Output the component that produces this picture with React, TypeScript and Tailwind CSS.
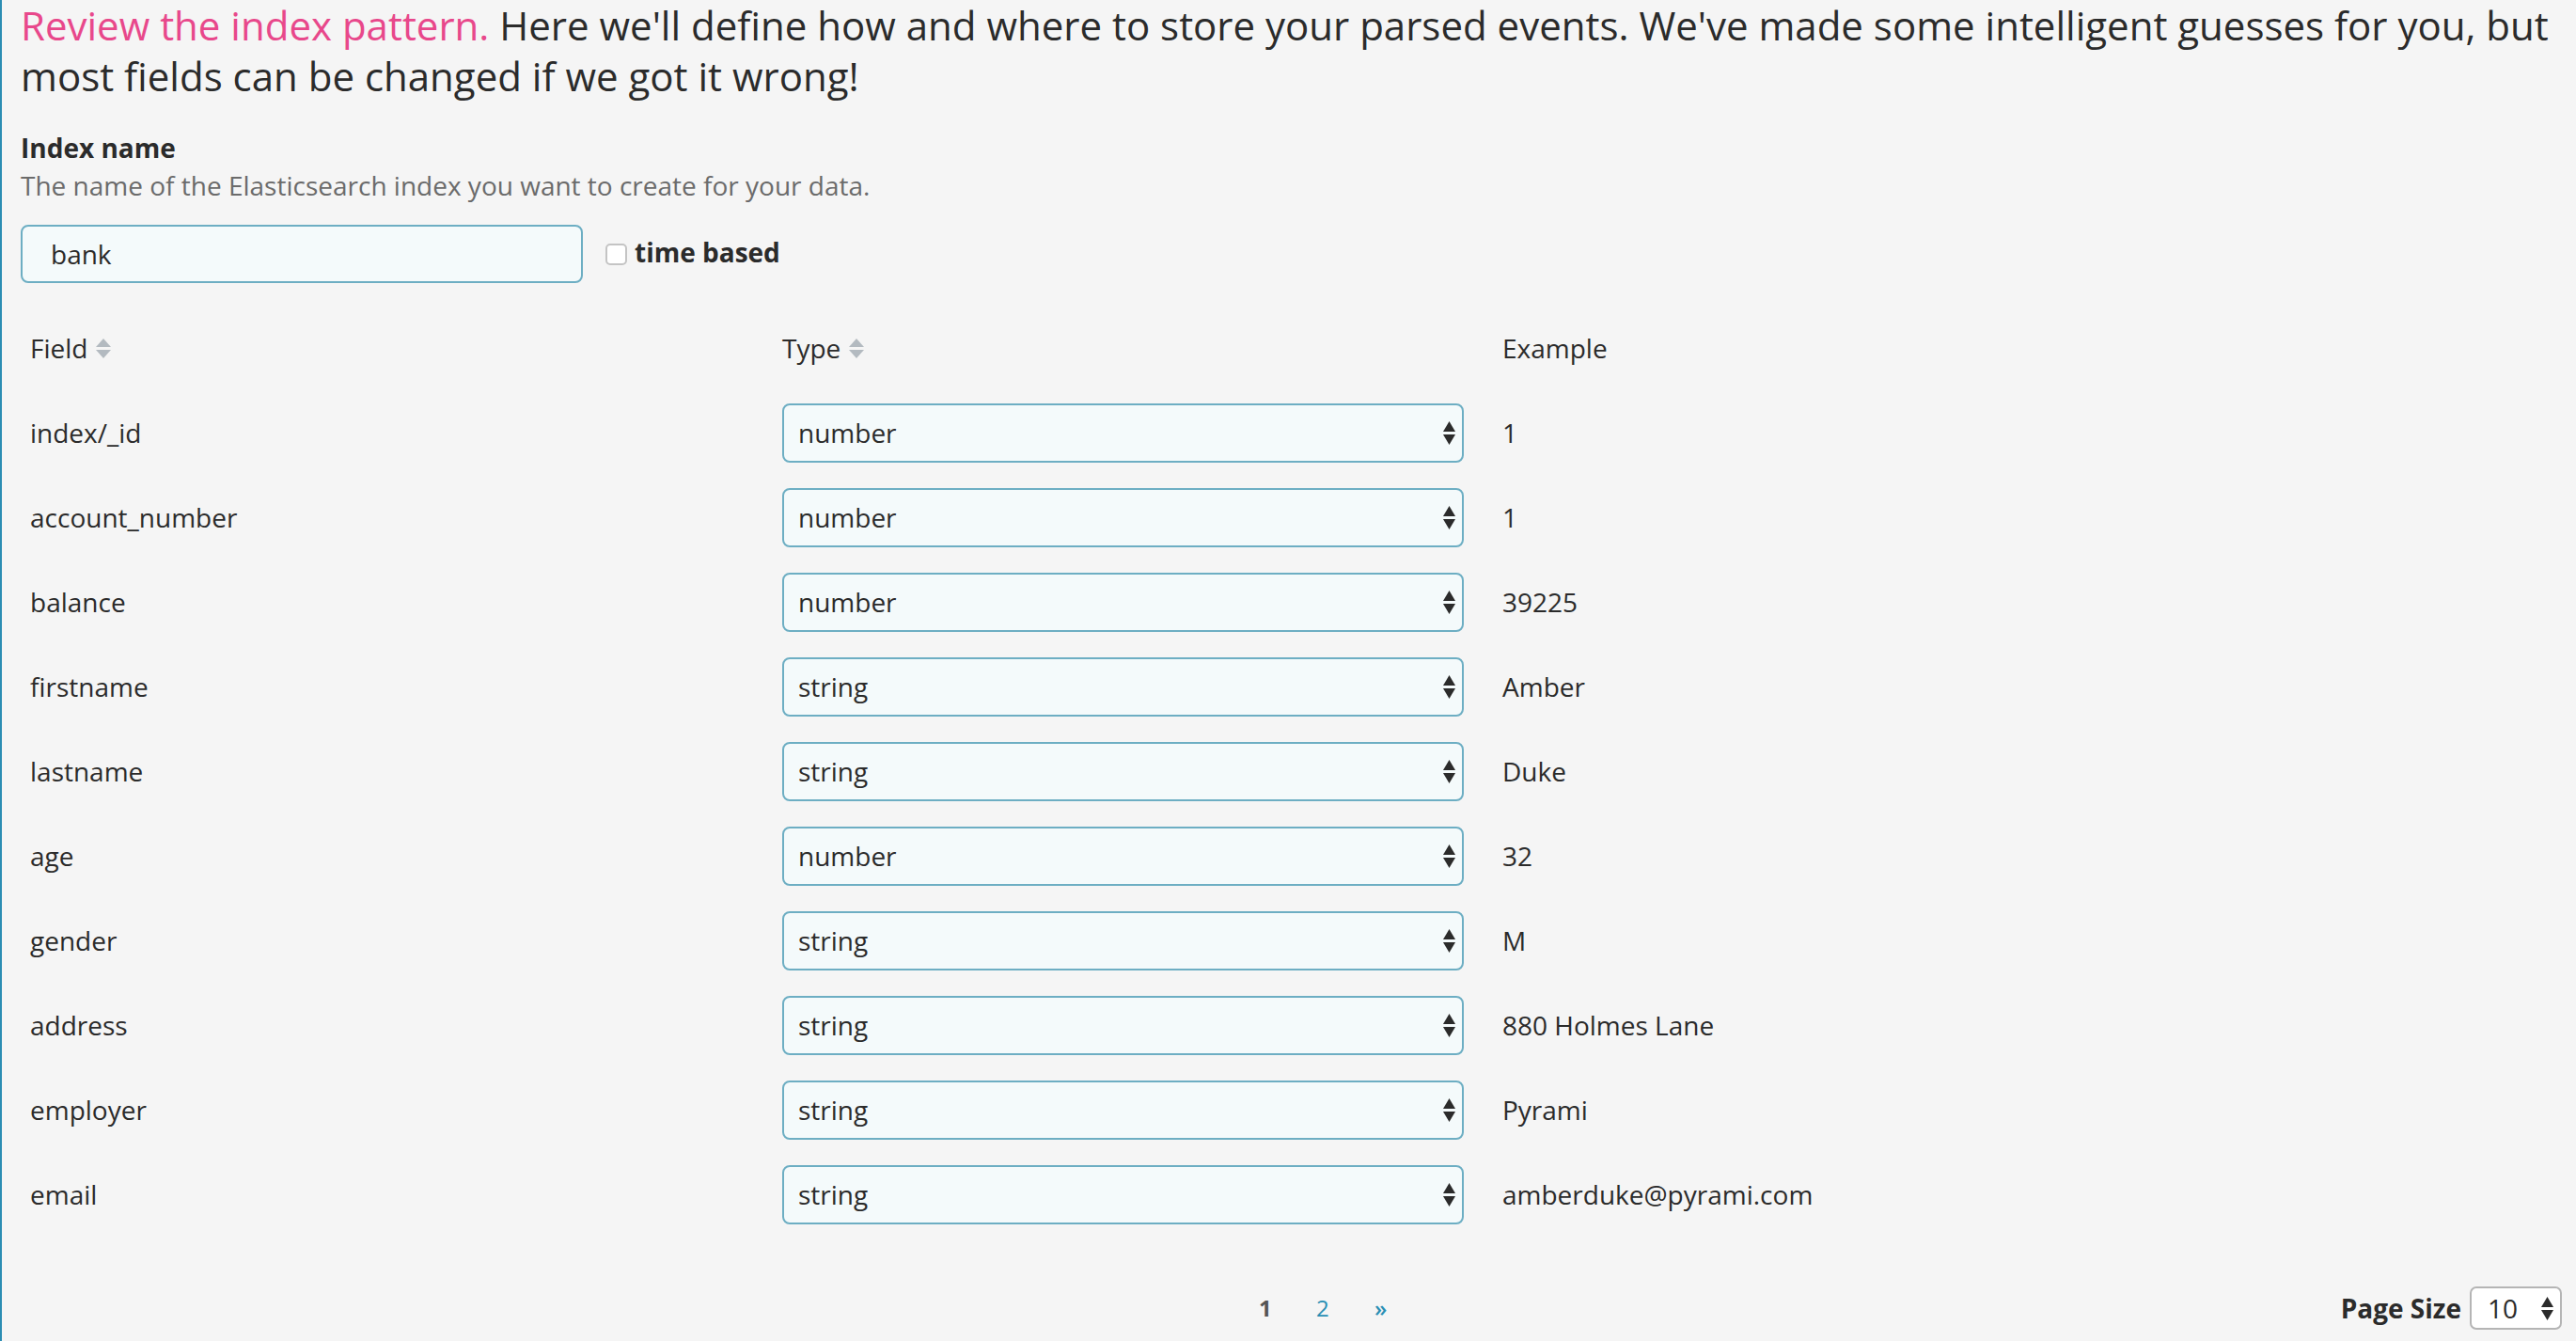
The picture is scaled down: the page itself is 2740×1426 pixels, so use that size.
import React from "react";

const rows: [string, string, string][] = [
  ["index/_id", "number", "1"],
  ["account_number", "number", "1"],
  ["balance", "number", "39225"],
  ["firstname", "string", "Amber"],
  ["lastname", "string", "Duke"],
  ["age", "number", "32"],
  ["gender", "string", "M"],
  ["address", "string", "880 Holmes Lane"],
  ["employer", "string", "Pyrami"],
  ["email", "string", "amberduke@pyrami.com"],
];

function SortIcon() {
  return (
    <svg width="16" height="21" viewBox="0 0 16 21" className="ml-[9px] shrink-0">
      <polygon points="8,0 16,9 0,9" fill="#b3bac0" />
      <polygon points="0,12 16,12 8,21" fill="#b3bac0" />
    </svg>
  );
}

function SelectArrows() {
  return (
    <svg width="13" height="25" viewBox="0 0 13 25" className="shrink-0">
      <polygon points="6.5,0 13,11 0,11" fill="#2b2b2b" />
      <polygon points="0,14 13,14 6.5,25" fill="#2b2b2b" />
    </svg>
  );
}

export default function App() {
  return (
    <div
      className="min-h-screen bg-[#f5f5f5] border-l-2 border-[#2b8db3] pl-[20px] pr-[15px] text-[#2b2b2b]"
      style={{ fontFamily: '"Open Sans", "Liberation Sans", sans-serif' }}
    >
      <h1 className="text-[42px] leading-[54px] font-normal m-0">
        <span className="text-[#e8488b]">Review the index pattern.</span> Here we'll define how and where to
        store your parsed events. We've made some intelligent guesses for you, but most fields can be changed
        if we got it wrong!
      </h1>

      <div className="mt-[29px] text-[28px] leading-[40px] font-bold">Index name</div>
      <div className="text-[28px] leading-[40px] text-[#6b6b6b]">
        The name of the Elasticsearch index you want to create for your data.
      </div>

      <div className="mt-[22px] flex items-center">
        <div className="h-[62px] w-[598px] rounded-[8px] border-2 border-[#6daec3] bg-[#f4fafb] pl-[30px] flex items-center text-[28px]">
          bank
        </div>
        <div className="ml-[24px] h-[23px] w-[23px] rounded-[5px] border-2 border-[#c4c4c4] bg-white" />
        <span className="ml-[8px] text-[28px] font-bold leading-[40px] -mt-[4px]">time based</span>
      </div>

      <div className="mt-[24px] grid grid-cols-[800px_766px_1fr] text-[28px]">
        <div className="h-[90px] flex items-center px-[10px]">
          Field
          <SortIcon />
        </div>
        <div className="h-[90px] flex items-center px-[10px]">
          Type
          <SortIcon />
        </div>
        <div className="h-[90px] flex items-center px-[10px]">Example</div>
        {rows.map(([field, type, example]) => (
          <React.Fragment key={field}>
            <div className="h-[90px] flex items-center px-[10px]">{field}</div>
            <div className="h-[90px] flex items-center px-[10px]">
              <div className="h-[63px] w-[725px] rounded-[8px] border-2 border-[#6daec3] bg-[#f4fafb] pl-[15px] pr-[7px] flex items-center justify-between">
                <span>{type}</span>
                <SelectArrows />
              </div>
            </div>
            <div className="h-[90px] flex items-center px-[10px]">{example}</div>
          </React.Fragment>
        ))}
      </div>

      <div className="mt-[53px] flex items-center">
        <div className="ml-[1317px] flex items-center text-[24px]">
          <span className="w-[61px] font-bold text-[#555555]">1</span>
          <span className="w-[62px] text-[#2a8fb4]">2</span>
          <span className="w-[40px] text-[#2a8fb4] font-semibold">»</span>
        </div>
        <div className="ml-auto flex items-center">
          <span className="text-[28px] font-bold mr-[9px]">Page Size</span>
          <div className="h-[46px] w-[98px] rounded-[7px] border-2 border-[#b5b5b5] bg-white pl-[17px] pr-[7px] flex items-center justify-between text-[28px]">
            <span>10</span>
            <SelectArrows />
          </div>
        </div>
      </div>
    </div>
  );
}
